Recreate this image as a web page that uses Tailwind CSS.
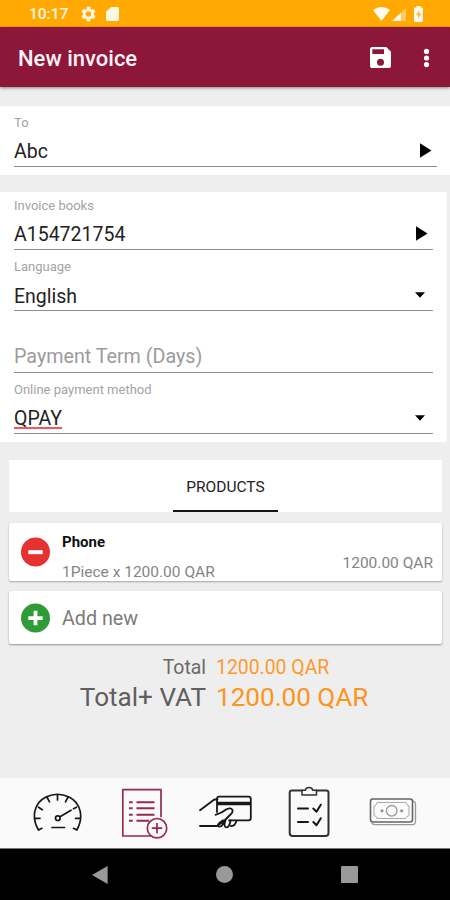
<!DOCTYPE html>
<html lang="en">
<head>
<meta charset="utf-8">
<title>New invoice</title>
<script src="https://cdn.jsdelivr.net/npm/@tailwindcss/browser@4"></script>
</head>
<body class="w-[450px] h-[900px] overflow-hidden bg-[#eeeeee] font-['Roboto',sans-serif] flex flex-col">
  <!-- status bar -->
  <div class="h-[27px] shrink-0 bg-[#ffa902] flex items-center pl-[29px] pr-[27px] pt-[1px] text-[#fff6e0]">
    <span class="w-[52px] text-[15.5px] leading-[20px] font-medium whitespace-nowrap">10:17</span>
    <svg class="w-[15px] h-[16px]" viewBox="2 2 20 20" fill="#fff6e0"><path d="M19.14 12.94c.04-.3.06-.61.06-.94 0-.32-.02-.64-.07-.94l2.03-1.58a.49.49 0 0 0 .12-.61l-1.92-3.32a.49.49 0 0 0-.59-.22l-2.39.96c-.5-.38-1.03-.7-1.62-.94l-.36-2.54a.48.48 0 0 0-.48-.41h-3.84a.47.47 0 0 0-.47.41l-.36 2.54c-.59.24-1.13.57-1.62.94l-2.39-.96a.48.48 0 0 0-.59.22L2.74 8.87a.47.47 0 0 0 .12.61l2.03 1.58c-.05.3-.09.63-.09.94s.02.64.07.94l-2.03 1.58a.49.49 0 0 0-.12.61l1.92 3.32c.12.22.37.29.59.22l2.39-.96c.5.38 1.03.7 1.62.94l.36 2.54c.05.24.24.41.48.41h3.84c.24 0 .44-.17.47-.41l.36-2.54c.59-.24 1.13-.56 1.62-.94l2.39.96c.22.08.47 0 .59-.22l1.92-3.32a.47.47 0 0 0-.12-.61l-2.01-1.58zM12 15.6A3.6 3.6 0 1 1 12 8.4a3.6 3.6 0 0 1 0 7.2z"/></svg>
    <svg class="ml-[10px] mt-[-1px] w-[13px] h-[14px]" viewBox="0 0 13 15" preserveAspectRatio="none" fill="#fff6e0"><path d="M5 0h6.5Q13 0 13 1.500V13.500Q13 15 11.500 15h-10Q0 15 0 13.500V5z"/></svg>
    <svg class="ml-auto mt-[-1px] w-[17px] h-[14px]" viewBox="0 0 17 14" fill="#fffaf0"><path d="M0 3Q8.500-3 17 3L8.500 14z"/></svg>
    <svg class="ml-[2px] w-[14px] h-[13px]" viewBox="0 0 14 14" preserveAspectRatio="none"><path d="M14 0v14H0z" fill="#ffc95c"/><path d="M9 5v9H0z" fill="#fffaf0"/></svg>
    <svg class="ml-[8px] mt-[-1px] w-[9px] h-[16px]" viewBox="0 0 9 16"><path d="M2.500 0h4v1.500H8q1 0 1 1V15q0 1-1 1H1q-1 0-1-1V2.500q0-1 1-1h1.500z" fill="#fffaf0"/><path d="M5.400 4L2 9.300h2.200V13L7.200 7.600H5.200z" fill="#ffb73a"/></svg>
  </div>
  <!-- app bar -->
  <div class="h-[60px] shrink-0 bg-[#8c173b] flex items-center pl-[18px] pr-[20px] pt-[3px] shadow-[0_1px_3px_rgba(0,0,0,0.45)]">
    <h1 class="text-[22px] leading-[29px] font-medium text-[#fdf3f5] whitespace-nowrap">New invoice</h1>
    <svg class="ml-auto mt-[-2px] w-[21px] h-[21px]" viewBox="3 3 18 18" fill="#fff"><path d="M17 3H5a2 2 0 0 0-2 2v14c0 1.100.89 2 2 2h14c1.100 0 2-.9 2-2V7l-4-4zm-5 16a3 3 0 1 1 0-6 3 3 0 0 1 0 6zm3-10H5V5h10v4z"/></svg>
    <svg class="ml-[32px] mt-[-2px] w-[7px] h-[20px]" viewBox="0 0 7 20" fill="#fff"><circle cx="3.500" cy="3.400" r="2.600"/><circle cx="3.500" cy="10" r="2.600"/><circle cx="3.500" cy="16.600" r="2.600"/></svg>
  </div>
  <!-- recipient -->
  <section class="mt-[19px] h-[69px] shrink-0 bg-white px-[14px] pr-[13px]">
    <div class="h-[61px] border-b border-[#8b8b8b] flex flex-col justify-end gap-[9px] pb-[2px]">
      <div class="h-4 leading-4 text-[13px] text-[#a3a3a3]">To</div>
      <div class="h-6 leading-6 text-[19.5px] text-[#222] flex items-center justify-between">Abc
        <svg class="mr-[5px] mt-[-3px] w-[13px] h-[15px]" viewBox="0 0 13 15"><path d="M1 .3L12.500 7.500 1 14.700z"/></svg></div>
    </div>
  </section>
  <!-- invoice details -->
  <section class="mt-[17px] h-[250px] w-[447px] shrink-0 bg-white rounded-r-[2px] pl-[14px] pr-[14px]">
    <div class="h-[58px] border-b border-[#8f8f8f] flex flex-col justify-end gap-[9px] pb-[2px]">
      <div class="h-4 leading-4 text-[13px] text-[#a3a3a3]">Invoice books</div>
      <div class="h-6 leading-6 text-[19.5px] text-[#222] flex items-center justify-between"><span>A154721754</span>
        <svg class="mr-[5px] mt-[-3px] w-[13px] h-[15px]" viewBox="0 0 13 15"><path d="M1 .3L12.500 7.500 1 14.700z"/></svg></div>
    </div>
    <div class="h-[61px] border-b border-[#8f8f8f] flex flex-col justify-end gap-[9px] pb-[2px]">
      <div class="h-4 leading-4 text-[13px] text-[#a3a3a3]">Language</div>
      <div class="h-6 leading-6 text-[19.5px] text-[#222] flex items-center justify-between"><span class="pt-[1px]">English</span>
        <svg class="mr-[8px] mt-[-2px] w-[10px] h-[6px]" viewBox="0 0 10 6"><path d="M0 .3h10L5 5.700z"/></svg></div>
    </div>
    <div class="h-[62px] border-b border-[#8f8f8f] flex flex-col justify-end pb-[3px]">
      <div class="h-6 leading-6 text-[19.700px] text-[#9b9b9b]">Payment Term (Days)</div>
    </div>
    <div class="h-[61px] border-b border-[#8f8f8f] flex flex-col justify-end gap-[9px] pb-[2px]">
      <div class="h-4 leading-4 text-[13px] text-[#a3a3a3]">Online payment method</div>
      <div class="h-6 leading-6 text-[19.5px] text-[#222] flex items-center justify-between"><span class="mt-[-2px] h-[22px] leading-6 border-b-2 border-[#f0585c]">QPAY</span>
        <svg class="mr-[8px] mt-[-2px] w-[10px] h-[6px]" viewBox="0 0 10 6"><path d="M0 .3h10L5 5.700z"/></svg></div>
    </div>
  </section>
  <!-- tab -->
  <div class="mt-[18px] ml-[9px] w-[433px] h-[52px] shrink-0 bg-white flex justify-center">
    <div class="w-[105px] border-b-2 border-[#151515] text-center text-[15.5px] leading-[55px] text-[#222]">PRODUCTS</div>
  </div>
  <!-- product line -->
  <div class="mt-[11px] ml-[9px] w-[433px] h-[58px] shrink-0 bg-white rounded-[2px] shadow-[0_1px_2px_rgba(0,0,0,0.32)] flex pl-[12px] pr-[9px]">
    <svg class="mt-[14px] w-[30px] h-[30px]" viewBox="0 0 30 30"><circle cx="14.500" cy="15" r="14.500" fill="#e5312f"/><path d="M7.300 13.200h14.400v4H7.300z" fill="#fff"/></svg>
    <div class="ml-[11px] pt-[9px] flex-1">
      <div class="h-5 leading-5 text-[15px] font-bold text-[#111]">Phone</div>
      <div class="mt-[10px] h-5 leading-5 text-[15.500px] text-[#858585] whitespace-nowrap">1Piece x 1200.00 QAR</div>
    </div>
    <div class="pt-[30px] leading-5 text-[15.500px] text-[#858585] whitespace-nowrap">1200.00 QAR</div>
  </div>
  <!-- add line -->
  <div class="mt-[10px] ml-[9px] w-[433px] h-[53px] shrink-0 bg-white rounded-[2px] shadow-[0_1px_2px_rgba(0,0,0,0.38)] flex items-center pl-[12px]">
    <svg class="w-[30px] h-[30px]" viewBox="0 0 30 30"><circle cx="14.500" cy="15" r="14.500" fill="#2e9b37"/><path d="M7.300 13.200h5.300V7.800h3.800v5.400h5.300v3.800h-5.300v5.300h-3.800V17H7.300z" fill="#fff"/></svg>
    <span class="ml-[11px] pt-[2px] text-[19.700px] leading-6 text-[#7b7b7b]">Add new</span>
  </div>
  <!-- totals -->
  <div class="mt-[11px] shrink-0 grid grid-cols-[206px_1fr] gap-x-[10px]">
    <div class="h-[26px] leading-[26px] text-[19.400px] text-[#6a6a6a] text-right">Total</div>
    <div class="h-[26px] leading-[26px] text-[19.400px] text-[#fc9a2b]">1200.00 QAR</div>
    <div class="h-[32px] leading-[32px] text-[26.100px] text-[#5f5f5f] text-right whitespace-nowrap">Total+ VAT</div>
    <div class="h-[32px] leading-[32px] text-[26.100px] text-[#fc9420]">1200.00 QAR</div>
  </div>
  <!-- bottom navigation -->
  <nav class="mt-auto h-[71px] shrink-0 bg-[#fafafa] flex items-start pt-[8px] pl-[32px] border-b border-[#777]">
    <svg class="w-[52px] h-[54px]" viewBox="32 786 52 54" fill="none" stroke="#161616" stroke-width="1.700" stroke-linecap="round">
      <path d="M38.500 830C31 817 34 803 46 797Q57.500 791.500 69 797C81 803 84 817 76.800 830M38.500 830l3.300-1.700M76.800 830l-3.300-1.700M57.500 794.500v5.500M47.200 797.500l2.300 4.300M67.800 797.500l-2.300 4.300M38.500 807.200l3.800 2.500M35 818.300h5M75.500 818.300h5M60 816.700l11-6.500M76.500 807.200l-3 1.600M52 827.500h12.500"/>
      <circle cx="57.800" cy="818.200" r="2.300"/>
    </svg>
    <svg class="ml-[36px] w-[50px] h-[54px]" viewBox="120 786.300 50 54" fill="none" stroke="#98284c" stroke-width="1.700">
      <path d="M161 817.500V790h-38.200v46.300h28" stroke-linejoin="round"/>
      <path d="M129 802.500h3.700M136.500 802.500H154.500M129 808.500h3.700M136.500 808.500H154.500M129 815h3.700M136.500 815H154.500M129 821h3.700M136.500 821H149" stroke-width="2"/>
      <circle cx="157" cy="828.500" r="9.700"/><path d="M151.800 828.500h10.400M157 823.300v10.400"/>
    </svg>
    <svg class="ml-[26px] w-[60px] h-[54px]" viewBox="196 786 60 54" fill="none" stroke="#161616" stroke-width="1.800" stroke-linecap="round" stroke-linejoin="round">
      <path d="M200 810.300L214.300 799.500H217.500M217 812V799q0-2.300 2.300-2.300H248.500q2.300 0 2.300 2.300V818q0 2.300-2.300 2.300H229"/>
      <path d="M217 803.500h33.500" stroke-width="3.300" stroke-linecap="butt"/>
      <path d="M215.500 814.800Q222 813 226.500 809.300Q231 807 232.500 810Q233 812.500 230.500 814.500L225 820Q221 824 218 824.500M200 826h17.300Q220 821.500 223 820.300M218 824.500Q218 827.500 221.500 826L225.500 821M225 821.500Q223.500 827 226.500 827.300Q229.500 827.500 230.500 820.500M231 826Q235 826.500 236.500 820.500"/>
    </svg>
    <svg class="ml-[30px] w-[46px] h-[54px]" viewBox="286 786 46 54" fill="none" stroke="#303030" stroke-width="2" stroke-linecap="round" stroke-linejoin="round">
      <path d="M302 790.500h-10q-2.300 0-2.300 2.300V833q0 3 3 3H325.500q3 0 3-3V792.800q0-2.300-2.300-2.300H316.500"/>
      <path d="M302 790.200h3.200q.8-2.700 3.800-2.700t3.800 2.700H316.500V795H302z" stroke-width="1.500"/>
      <path d="M298 808.500h10M298 822h10M313.300 808.500l3.200 3.200 4.300-7M313.300 822l3.200 3.200 4.300-7" stroke="#161616"/>
    </svg>
    <svg class="ml-[36px] w-[50px] h-[54px]" viewBox="368 786 50 54" fill="none" stroke="#666" stroke-width="1.300">
      <rect x="370.500" y="799" width="42" height="23" rx="2.500" stroke-width="1.600"/>
      <path d="M371.500 822.500q1 2.200 3.500 2.200H412q3.500 0 3.500-3.500V804q0-2.300-2.500-3.200" stroke="#999"/>
      <path d="M377 802.500H406q.5 3 3 3.500V815.500q-2.500.5-3 3H377q-.5-2.500-3-3V806q2.500-.5 3-3.500z" stroke="#a8a8a8" stroke-width="1"/>
      <circle cx="391.700" cy="810.800" r="5.300" stroke="#999"/><circle cx="382" cy="810.800" r="1" fill="#888" stroke="#999"/><circle cx="401.700" cy="810.800" r="1" fill="#888" stroke="#999"/>
    </svg>
  </nav>
  <!-- system navigation -->
  <div class="h-[51px] shrink-0 bg-black flex items-center justify-between pl-[92px] pr-[92px]">
    <svg class="w-[16px] h-[18px]" viewBox="0 0 16 18"><path d="M15.600 0v18L0 9z" fill="#999"/></svg>
    <div class="w-[17px] h-[17px] rounded-full bg-[#999]"></div>
    <div class="w-[17px] h-[17px] rounded-[1px] bg-[#999]"></div>
  </div>
</body>
</html>
